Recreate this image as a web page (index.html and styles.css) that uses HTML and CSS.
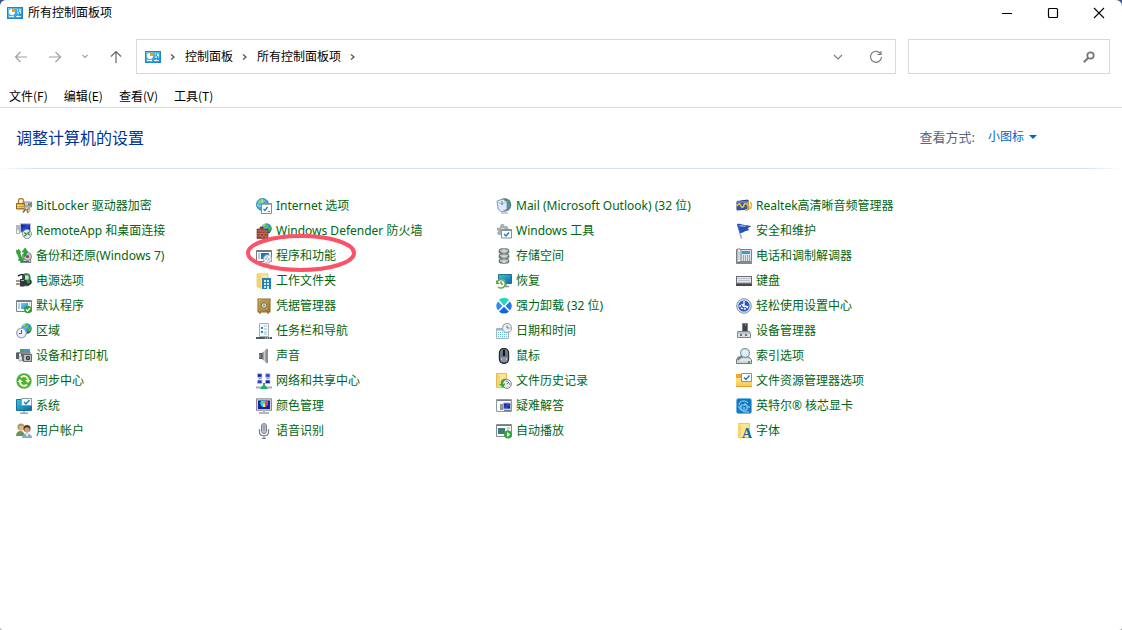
FILE: index.html
```html
<!DOCTYPE html>
<html lang="zh-CN">
<head>
<meta charset="utf-8">
<meta name="viewport" content="width=device-width, initial-scale=1">
<title>所有控制面板项</title>
<link rel="stylesheet" href="styles.css">
</head>
<body>
<svg class="defs" aria-hidden="true">
  <defs>
    <linearGradient id="sky" x1="0" y1="0" x2="1" y2="1"><stop offset="0" stop-color="#6bd3f7"/><stop offset="1" stop-color="#1687d2"/></linearGradient>
    <linearGradient id="screen" x1="0" y1="0" x2="1" y2="1"><stop offset="0" stop-color="#35c8e0"/><stop offset="1" stop-color="#0b66a8"/></linearGradient>
    <linearGradient id="navy" x1="0" y1="0" x2="1" y2="1"><stop offset="0" stop-color="#0b0f8a"/><stop offset=".5" stop-color="#2a45d8"/><stop offset="1" stop-color="#0a0d7a"/></linearGradient>
    <linearGradient id="metal" x1="0" y1="0" x2="1" y2="0"><stop offset="0" stop-color="#5e6266"/><stop offset=".5" stop-color="#c9cdd1"/><stop offset="1" stop-color="#6d7175"/></linearGradient>
    <linearGradient id="gold" x1="0" y1="0" x2="1" y2="1"><stop offset="0" stop-color="#f3cf63"/><stop offset="1" stop-color="#a87413"/></linearGradient>
    <linearGradient id="folder" x1="0" y1="0" x2="0" y2="1"><stop offset="0" stop-color="#ffe08a"/><stop offset="1" stop-color="#f7c64a"/></linearGradient>
    <radialGradient id="ocean" cx=".4" cy=".3" r=".8"><stop offset="0" stop-color="#8fd8ff"/><stop offset=".5" stop-color="#2a7fe0"/><stop offset="1" stop-color="#0b2f9c"/></radialGradient>
    <symbol id="i-panel" viewBox="0 0 16 16"><rect x=".5" y="2.500" width="15" height="11" fill="url(#sky)" stroke="#1d84cf"/><circle cx="5" cy="7" r="3" fill="#fff"/><path d="M5 7V3.500A3.500 3.500 0 0 1 8.500 7z" fill="#f49a1c"/><path d="M10 5h1M12 5h2M10 8h2M13 8h1M12 6.500h2" stroke="#fff"/><path d="M2 11.500h5M9 11.500h5" stroke="#d9f3ff"/><path d="M6 10.500v2M11 10.500v2" stroke="#fff"/></symbol>
    <symbol id="globe" viewBox="0 0 10 10"><circle cx="5" cy="5" r="4.700" fill="url(#ocean)"/><path d="M3 .8 6 .6 5.500 3 3.500 4 2 3zM6 4l3-1 .5 3L7 8.500 5.500 6z" fill="#42b83e"/><path d="M2.200 2.600 4 1.500" stroke="#d6f7d0"/></symbol>
    <symbol id="i-bitlocker" viewBox="0 0 16 16"><path d="M7 4h8.500v5H7z" fill="#d3d6d8" stroke="#858a8e"/><path d="M12 5h3v3h-3z" fill="#72797b"/><path d="M13 6h2" stroke="#55d34a"/><path d="M2.500 6V3a2.500 2.500 0 0 1 5 0v3" fill="none" stroke="#b5862e" stroke-width="1.500"/><path d="M.5 5.500h8v5.500h-8z" fill="url(#gold)" stroke="#966916"/><path d="M1 7.500h7M1 9.500h7" stroke="#fbe18c" stroke-width=".7"/><circle cx="11" cy="9.500" r="2.200" fill="none" stroke="#a3a6a8" stroke-width="1.500"/><path d="m11 11 1 4M9.500 11 7 14.500" stroke="#7d6945" stroke-width="1.500"/><circle cx="12.500" cy="12" r="1.700" fill="none" stroke="#c59743"/></symbol>
    <symbol id="i-remote" viewBox="0 0 16 16"><path d="M4.500.8h10v8.500h-10z" fill="url(#navy)" stroke="#b6bcc6"/><path d="M.5 2.500h3v8h-3z" fill="#eef1f4" stroke="#b0b5bb"/><path d="M1 4h2M1 6h2" stroke="#758594"/><circle cx="11" cy="11" r="4.500" fill="#e5ecf1" stroke="#8d98a2"/><path d="m8.300 9.500 2.200 1.800-2.200 2M13.800 8.500l-2 1.800 2 2" fill="none" stroke="#238b38" stroke-width="1.300"/></symbol>
    <symbol id="i-backup" viewBox="0 0 16 16"><path d="M7 6h6l2 8.500H4.500z" fill="#d5d8da" stroke="#7c8285"/><circle cx="11.500" cy="8.500" r="4" fill="#c5c9cb" stroke="#818689"/><circle cx="11.500" cy="8.500" r="1.500" fill="#943b3f"/><path d="M1 6 0 2l2 1 .5-2L5 4.500 4 5l2 6 1.500-1-.5 4-5-2 1.500-.5L1.500 6zM6 4l3-4 3 4-1.500.2Q11 7 8.500 9q-1-2-.5-5z" fill="#29ad35" stroke="#168023" stroke-width=".5"/><path d="M5 13.500h8" stroke="#5e6467"/></symbol>
    <symbol id="i-power" viewBox="0 0 16 16"><rect x="6.500" y=".8" width="7.500" height="12" rx="3" fill="#2d9e40" stroke="#4a5d50"/><path d="M8 2.500h4.500v4H8z" fill="#c9eccb"/><path d="M0 8h4M0 11h4" stroke="#87795b" stroke-width="1.500"/><path d="M4 6h4l3 2v3l-3 2.500H4z" fill="#33393d"/><path d="M10 10c3 4 7-1 4-3M2 3c5-3 7-1 6 3" fill="none" stroke="#272c2f" stroke-width="1.500"/><path d="M5 7.500h3" stroke="#aeb5b8"/></symbol>
    <symbol id="i-default" viewBox="0 0 16 16"><path d="M.5 2.500h15v11H.5z" fill="#f8fafb" stroke="#7b8288"/><path d="M1 3.500h14" stroke="#737a80"/><path d="M2 6h2M2 8h2M2 10h2M13 6h1" stroke="#70a7c5"/><path d="M5 5h7v6H5z" fill="url(#sky)"/><circle cx="12" cy="11.500" r="3.800" fill="#329a37"/><path d="m10 11.500 1.500 1.500 2.500-3" fill="none" stroke="#fff" stroke-width="1.300"/></symbol>
    <symbol id="i-region" viewBox="0 0 16 16"><use href="#globe" x="5" y="0" width="11" height="11"/><circle cx="5.500" cy="10" r="4.800" fill="#edf1f5" stroke="#98a3af" stroke-width="1.300"/><path d="M5.500 7v3.500H3" fill="none" stroke="#4b5f78"/></symbol>
    <symbol id="i-devices" viewBox="0 0 16 16"><path d="M4 1h10v4H4z" fill="#42a653"/><path d="M8 1h5v4H8z" fill="#4394e0"/><path d="M.5 4h14v2H.5z" fill="#85898d"/><path d="M0 5h3v6H0zM5 6h2v7H5z" fill="#5a5e63"/><path d="M3 8h3v5H3z" fill="#eceff1" stroke="#7c8287" stroke-width=".6"/><rect x="7.500" y="6.500" width="8" height="7" fill="#bdc1c5" stroke="#666b70"/><circle cx="12" cy="10" r="2.200" fill="#343b43"/><circle cx="12" cy="10" r=".7" fill="#e0e5e8"/></symbol>
    <symbol id="i-sync" viewBox="0 0 16 16"><circle cx="8" cy="8" r="7.700" fill="#4caf43"/><path d="M4 9a4 4 0 0 0 7 2.500M12 7a4 4 0 0 0-7-2.500" fill="none" stroke="#f7f6b8" stroke-width="2"/><path d="M1.500 9 4 6l3 3zM9 7l3 3 2.500-3z" fill="#f7f6b8"/></symbol>
    <symbol id="i-system" viewBox="0 0 16 16"><path d="M.5 1.500h15v11H.5z" fill="url(#screen)" stroke="#1b739b"/><path d="M8 13v2M4 15.300h8" stroke="#9ba5ab" stroke-width="1.500"/><path d="M5.500.5h10v7h-10z" fill="#fff" stroke="#8d989d"/><path d="m8 4 2 2 3.500-4" fill="none" stroke="#1578c6" stroke-width="1.400"/></symbol>
    <symbol id="i-users" viewBox="0 0 16 16"><circle cx="5" cy="4" r="3.500" fill="#a39a55"/><circle cx="5.500" cy="5" r="2.500" fill="#e1b88d"/><path d="M0 13c0-6 8-7 9 0z" fill="#63965a"/><circle cx="11" cy="5.500" r="3.500" fill="#533724"/><circle cx="11" cy="7" r="2.700" fill="#d69c73"/><path d="M6 15c0-6 10-6 10 0z" fill="#7fa9d7"/><path d="m10 11 1 3 1.500-3" fill="#fff"/></symbol>
    <symbol id="i-internet" viewBox="0 0 16 16"><circle cx="6.500" cy="6.500" r="6" fill="url(#sky)" stroke="#397ea8"/><path d="M2 4c2-3 5-3 7-1L7 6 4 6z" fill="#7ed06c"/><path d="M1 7c3 2 8 2 10-1M6 1v10" fill="none" stroke="#d7f3ff" stroke-width=".7"/><path d="M5.500 5.500h10v10h-10z" fill="#fff" stroke="#828d96"/><path d="M6 6.500h9" stroke="#a4acb2"/><path d="m7.500 11 1.500 1.500L11.500 9" fill="none" stroke="#187fc4" stroke-width="1.300"/><path d="M12 13.500h2" stroke="#777"/></symbol>
    <symbol id="i-firewall" viewBox="0 0 16 16"><use href="#globe" x="5" y="0" width="11" height="11"/><path d="M1 6h3V4h3v2h5v9.500H1z" fill="#933f32" stroke="#6b2921" stroke-width=".6"/><path d="M1 8h11M1 10.500h11M1 13h11M4 6v2M8 6v2M6 8v2M10 8v2M4 11v2M8 11v2M6 13v2M10 13v2" stroke="#d5a394" stroke-width=".5"/></symbol>
    <symbol id="i-programs" viewBox="0 0 16 16"><path d="M.5 2.500h15v11H.5z" fill="#f9fafb" stroke="#747b83"/><path d="M1 3.500h14" stroke="#6e757d"/><path d="M2 6h2M2 8h2M2 10h2" stroke="#8d969f"/><path d="M5 5h8v6H5z" fill="#1675c6"/><circle cx="11.500" cy="11" r="4.200" fill="#d7dce5" stroke="#9ca6b4" stroke-width=".7"/><path d="M11.500 11 14 8M11.500 11 9 14" stroke="#fff" stroke-width="1.500"/><circle cx="11.500" cy="11" r="1.200" fill="#fff" stroke="#7b8795" stroke-width=".5"/></symbol>
    <symbol id="i-work" viewBox="0 0 16 16"><path d="M1 .8h11v13H1z" fill="#ffe58f" stroke="#e4bd50" stroke-width=".7"/><path d="M1 1 5 3v13l-4-2z" fill="#f5d272"/><path d="M6 5h9v11H6z" fill="#287cb4"/><path d="M8 7h2v2H8zM11 7h2v2h-2zM8 10h2v2H8zM11 10h2v2h-2zM8 13h2v2H8zM11 13h2v3h-2z" fill="#c4edff"/></symbol>
    <symbol id="i-vault" viewBox="0 0 16 16"><rect x="2" y="1" width="12" height="13" fill="url(#gold)" stroke="#85672b"/><path d="M4 3h8v9H4z" fill="#c3a462" stroke="#8f7338" stroke-width=".7"/><circle cx="8" cy="7.500" r="2.800" fill="#dfe0d5" stroke="#6e6650"/><circle cx="8" cy="7.500" r="1" fill="#817a66"/><path d="M3 15h2M11 15h2" stroke="#584821"/></symbol>
    <symbol id="i-taskbar" viewBox="0 0 16 16"><path d="M3.500.5h9v13h-9z" fill="#f7fafc" stroke="#a7afb6"/><path d="M5 4h2v2H5zM5 8h2v2H5z" fill="#2387d1"/><path d="M8 3h3M8 6h3M8 9h3M8 11h3" stroke="#a8bac7"/><path d="M0 14h16v2H0z" fill="#525a60"/><path d="M9 15h1M11 15h1M13 15h1" stroke="#fff"/></symbol>
    <symbol id="i-sound" viewBox="0 0 16 16"><path d="M3 5h3v6H3z" fill="#53585d"/><path d="M6 5 11 .5v15L6 11z" fill="url(#metal)"/><path d="M10 1h2v14h-2z" fill="#8c9196"/><path d="M4 6v4" stroke="#a6aaae"/></symbol>
    <symbol id="i-network" viewBox="0 0 16 16"><path d="M1.500.8h4.500v3.500H1.500zM9.500.8h4.500v3.500H9.500zM1.500 7h4.500v3.500H1.500zM9.500 7h4.500v3.500H9.500z" fill="url(#navy)" stroke="#b9c0d8" stroke-width=".8"/><path d="M2.500 5.500h3M10.500 5.500h3" stroke="#8d989e"/><path d="M0 14.500h16" stroke="#a4afb5" stroke-width="2"/><path d="M7 10h2v2l3 4H4l3-4z" fill="#21ac69"/></symbol>
    <symbol id="i-color" viewBox="0 0 16 16"><path d="M.5.8h15v11.500H.5z" fill="#d3d5d1" stroke="#898c87"/><path d="M2 2.500h12v8.500H2z" fill="#1420a5"/><path d="M4 4h3v5L5 8z" fill="#20cee4"/><path d="M7 3h3v6H7z" fill="#f2ed46"/><path d="M9 3h3v4L9 9z" fill="#ed367f"/><path d="M5 3h4v3H5z" fill="#4ee06f"/><path d="M8 12v2M3 15h10" stroke="#b4b7b2" stroke-width="2"/></symbol>
    <symbol id="i-mic" viewBox="0 0 16 16"><rect x="5.500" y=".5" width="5" height="10" rx="2.500" fill="#d8dce5" stroke="#767e91"/><path d="M6 3h4M6 5h4M6 7h4M8 1v9" stroke="#858ca0" stroke-width=".8"/><path d="M3.500 6v3c0 5 9 5 9 0V6M8 13v2.500M6 15.500h4" fill="none" stroke="#777e94" stroke-width="1.200"/></symbol>
    <symbol id="i-mail" viewBox="0 0 16 16"><circle cx="8.500" cy="7" r="6.800" fill="#778da1"/><path d="M7 1c5-2 9 3 8 7l-3 5z" fill="#4a8f56"/><path d="M11 2c4 3 4 8 0 10" fill="#6184c4"/><path d="M1 3 7 1l4 3v7l-5 3-4-3z" fill="#dceafa" stroke="#6d8aa8" stroke-width=".8"/><path d="m1 4 5 2 5-2" fill="none" stroke="#aec4da"/><path d="M6 3v4" stroke="#4d79aa"/><path d="M5 15h7" stroke="#b7bec5" stroke-width="1.500"/></symbol>
    <symbol id="i-tools" viewBox="0 0 16 16"><path d="m5 1 3 .2.500 2 2-.5 2 2-1 2 2 1v3l-2 .5-3 3-3-.5-1-2-2 .5-1.500-2.500 1.500-1.500-1.500-1L1 4.500l2.500.5z" fill="#a7afb6"/><circle cx="7" cy="7" r="2" fill="#edf0f3"/><path d="M5.500 6.500h10v8.500h-10z" fill="#fff" stroke="#858f96"/><path d="M6 7.500h9" stroke="#88939a"/><path d="m8 11 2 2 3-3.500" fill="none" stroke="#187bc0" stroke-width="1.400"/></symbol>
    <symbol id="i-storage" viewBox="0 0 16 16"><path d="M3 2.500c0-3 10-3 10 0v2c0 2-10 2-10 0zM3 7.500c0-3 10-3 10 0v2c0 2-10 2-10 0zM3 12.500c0-3 10-3 10 0v1.500c0 2-10 2-10 0z" fill="url(#metal)" stroke="#676b6f" stroke-width=".6"/><path d="M4 2.500c2 1 6 1 8 0M4 7.500c2 1 6 1 8 0M4 12.500c2 1 6 1 8 0" fill="none" stroke="#e6e8e9"/><path d="M10 4.500h1M10 9.500h1M10 14h1" stroke="#59e149"/></symbol>
    <symbol id="i-recovery" viewBox="0 0 16 16"><path d="M2.500 1.500h13v9h-13z" fill="url(#screen)" stroke="#256f8b"/><path d="M10 11v2M8 13.500h5" stroke="#8b969b" stroke-width="1.300"/><circle cx="5" cy="10.500" r="4.500" fill="#f5faed"/><path d="M1 9a4.300 4.300 0 1 1 1 5" fill="none" stroke="#66a944" stroke-width="1.500"/><path d="M0 7v4h4z" fill="#66a944"/><path d="M5 8v3h2" fill="none" stroke="#46663c"/></symbol>
    <symbol id="i-uninstall" viewBox="0 0 16 16"><path d="M3.500 1.800Q8-1.300 12.500 1.800L8 7z" fill="#20d6c4" stroke="#20d6c4"/><path d="M2 3.500 6.500 8 2 12.500Q-1.500 8 2 3.500z" fill="#2e8cf0"/><path d="M14 3.500 9.500 8l4.500 4.500Q17.500 8 14 3.500z" fill="#2476e7"/><path d="m8 8.700 5 5Q8 17.500 3 13.700z" fill="#1465e5"/></symbol>
    <symbol id="i-date" viewBox="0 0 16 16"><path d="M.5 5.500h12v10H.5z" fill="#f3fafc" stroke="#a4b7bf"/><path d="M1 6.500h11" stroke="#88b9ce" stroke-width="2"/><path d="M2 9.500h9M2 11.500h9M2 13.500h9" stroke="#68b9d9" stroke-dasharray="1 1"/><circle cx="11" cy="5" r="4.500" fill="#edf1f3" stroke="#9aa6ad" stroke-width="1.200"/><path d="M11 2.500V5h2.500" fill="none" stroke="#647581"/></symbol>
    <symbol id="i-mouse" viewBox="0 0 16 16"><rect x="3.500" y=".7" width="9" height="14.600" rx="4" fill="#8793a2" stroke="#25292e" stroke-width="1.400"/><path d="M5 4q3-4 6 0v5H5z" fill="#66727f"/><path d="M8 2v6" stroke="#15191d" stroke-width="2"/><path d="M5.500 10v2M10.500 10v2" stroke="#b9c6d5"/></symbol>
    <symbol id="i-history" viewBox="0 0 16 16"><path d="M.5.5h10v14H.5z" fill="#ffe58b" stroke="#dfbc55"/><path d="M1 1 4 3v13l-3-2z" fill="#f4d376"/><circle cx="11" cy="11" r="4.400" fill="#e4e8e9" stroke="#7f878b"/><path d="m11 11 2-2M8 11h1M11 8v1M13 11h1" stroke="#58636a"/><path d="M11 6C6 5 4 8 5 11H3l4 4 2-4H7c0-3 1-4 4-5z" fill="#38aa3c"/></symbol>
    <symbol id="i-trouble" viewBox="0 0 16 16"><path d="M.5 1.500h15v12H.5z" fill="#f9fafb" stroke="#9198a0"/><path d="M1 2.500h14" stroke="#747c86"/><path d="M7.500 5h7v6h-7z" fill="url(#navy)" stroke="#a8b0ba"/><path d="M4 6h3v6H4z" fill="#8a929c"/><path d="M8 12.500h7" stroke="#6c7788"/><path d="M5 8h1" stroke="#7ee370"/></symbol>
    <symbol id="i-autoplay" viewBox="0 0 16 16"><path d="M.5 1.500h15v12H.5z" fill="#f9fafa" stroke="#858c91"/><path d="M1 2.500h14" stroke="#737b81"/><path d="M2 5h7v6H2z" fill="#3c7d75"/><path d="M11 5h3M11 7h2" stroke="#9aaaa8"/><circle cx="12" cy="11.500" r="4" fill="#37a83e"/><path d="m11 9 3 2.500-3 2.500z" fill="#fff"/></symbol>
    <symbol id="i-realtek" viewBox="0 0 16 16"><path d="M1 3.500 12 2l1 9-12 1z" fill="#3757ad" stroke="#294482"/><path d="M1 4h11" stroke="#899ece"/><path d="M1 8c2-4 3-2 4 0s3 1 3-1 3-2 4 1" fill="none" stroke="#f3cc42" stroke-width="1.500"/><path d="M12 4v7M14 4c2 2 2 5 0 7" fill="none" stroke="#eeb134" stroke-width="1.500"/><path d="M9 11h3v2H9z" fill="#eeb134"/></symbol>
    <symbol id="i-flag" viewBox="0 0 16 16"><path d="m1.500 1.500 4 14" stroke="#9ba9b7" stroke-width="1.500"/><path d="M1 1c4-1 5 1 8 1l6.500 1-3.500 2 1 2.500C9 7 8 10 4 10z" fill="#2853b5"/><path d="M3 3c3-1 4 1 7 0" fill="none" stroke="#7ca2e8" stroke-width="1.300"/></symbol>
    <symbol id="i-phone" viewBox="0 0 16 16"><path d="M.5 1.500h15v12H.5z" fill="#e0e4e7" stroke="#7a848c"/><rect x="1" y="1" width="4" height="13" rx="1" fill="#f5f7f8" stroke="#6e7b84"/><path d="M6 3h8v3H6z" fill="#3c9ccb"/><path d="M7 8h7M7 10h7M7 12h7" stroke="#596b78" stroke-dasharray="1 1"/><path d="M0 15h16" stroke="#59656e" stroke-width="1.500"/><path d="M3 3v9" stroke="#a7b2b9"/></symbol>
    <symbol id="i-keyboard" viewBox="0 0 16 16"><path d="M0 3h16v10H0z" fill="#686d73"/><path d="M1 4h14v6H1z" fill="#e6e9eb"/><path d="M1.500 5.500h13M2.500 7.500h12M1.500 9.500h13" stroke="#91989e" stroke-dasharray="1 1"/><path d="M0 12h16" stroke="#454a50" stroke-width="2"/></symbol>
    <symbol id="i-ease" viewBox="0 0 16 16"><circle cx="8" cy="8" r="7.300" fill="#dce2ef" stroke="#8291ab"/><circle cx="8" cy="8" r="5.600" fill="#2457bf"/><path d="M4 7a4 4 0 1 0 8 0" fill="none" stroke="#fff" stroke-width="1.500" stroke-dasharray="2 1"/><path d="M8 3v5M5.500 6 8 8.500h3" fill="none" stroke="#fff" stroke-width="1.400"/></symbol>
    <symbol id="i-manager" viewBox="0 0 16 16"><path d="M6.500.5h5v8h-5z" fill="#3c4248" stroke="#777e84"/><path d="M9 2h1" stroke="#4ee048" stroke-width="1.500"/><path d="M1.500 8.500h12l1 2v4h-13z" fill="#dbdfe2" stroke="#7f878e"/><path d="M5 11v2M10 11v2" stroke="#474e55" stroke-width="1.500"/><path d="M1 10h13" stroke="#9da5ab"/></symbol>
    <symbol id="i-index" viewBox="0 0 16 16"><path d="M2 9h11l2.500 3v3.500H.5V12z" fill="#d2d7db" stroke="#717981"/><path d="M1 12h14" stroke="#f5f7f8"/><circle cx="9" cy="5" r="4.400" fill="#d9effb" fill-opacity=".9" stroke="#8197a8" stroke-width="1.200"/><path d="M6 8 1.500 12" stroke="#717e89" stroke-width="1.700"/><path d="M12 14h2" stroke="#27b632" stroke-width="2"/></symbol>
    <symbol id="i-explorer" viewBox="0 0 16 16"><path d="M0 1h6l2 2h8v11H0z" fill="#e7a927"/><path d="M0 5h16v9H0z" fill="url(#folder)"/><path d="M5.500.5h10v8h-10z" fill="#fff" stroke="#86919a"/><path d="m8 4.500 2 2 3.500-4" fill="none" stroke="#1679ce" stroke-width="1.400"/><path d="M0 13.500h16" stroke="#e1a02b"/></symbol>
    <symbol id="i-intel" viewBox="0 0 16 16"><rect x=".5" y=".5" width="15" height="15" rx="2" fill="#1478bd" stroke="#6ab8e7"/><path d="M3 7c0-5 7-5 9-2M5 7h6v5H5zM2 9h3M3 11h2M11 9h3M6 12c0 2 3 2 7 2M9 5v2" fill="none" stroke="#a4ddfa"/><path d="M7 9h2v2H7z" fill="#57b9ef"/></symbol>
    <symbol id="i-fonts" viewBox="0 0 16 16"><path d="M2.500.5h11v14h-11z" fill="#ffe58a" stroke="#ecc762"/><path d="M2 1 5 3v13l-3-2z" fill="#f6d373"/><text class="font-letter" x="6" y="15">A</text></symbol>
  </defs>
</svg>
<div class="window">
  <header class="titlebar">
    <svg class="icon" aria-hidden="true"><use href="#i-panel"/></svg>
    <h1 class="title">所有控制面板项</h1>
    <div class="caption">
      <button class="caption-btn" aria-label="最小化"><svg width="12" height="12"><path d="M1 6.500h10" stroke="#000"/></svg></button>
      <button class="caption-btn" aria-label="最大化"><svg width="12" height="12"><rect x="1.500" y="1.500" width="9" height="9" rx="1" fill="none" stroke="#000" stroke-width="1.200"/></svg></button>
      <button class="caption-btn" aria-label="关闭"><svg width="12" height="12"><path d="m1 1 10 10M11 1 1 11" stroke="#000" stroke-width="1.100"/></svg></button>
    </div>
  </header>
  <div class="toolbar">
    <div class="history">
      <button class="nav-btn" aria-label="后退"><svg width="14" height="14" fill="none" stroke="#a0a0a0" stroke-width="1.200"><path d="M13 7H1.500M6.500 2l-5 5 5 5"/></svg></button>
      <button class="nav-btn" aria-label="前进"><svg width="14" height="14" fill="none" stroke="#a0a0a0" stroke-width="1.200"><path d="M1 7h11.500M7.500 2l5 5-5 5"/></svg></button>
      <button class="nav-btn nav-small" aria-label="最近浏览的位置"><svg width="8" height="8" fill="none" stroke="#a0a0a0" stroke-width="1.200"><path d="m1.500 2 2.500 2.500L6.500 2"/></svg></button>
      <button class="nav-btn" aria-label="向上"><svg width="14" height="14" fill="none" stroke="#666" stroke-width="1.200"><path d="M7 13V1.500M2 6.500l5-5 5 5"/></svg></button>
    </div>
    <nav class="address" aria-label="地址">
      <svg class="icon" aria-hidden="true"><use href="#i-panel"/></svg>
      <svg class="chev" width="6" height="8"><path d="m1 1.500 3 2.500-3 2.500"/></svg>
      <a class="crumb" href="#">控制面板</a>
      <svg class="chev" width="6" height="8"><path d="m1 1.500 3 2.500-3 2.500"/></svg>
      <a class="crumb" href="#">所有控制面板项</a>
      <svg class="chev" width="6" height="8"><path d="m1 1.500 3 2.500-3 2.500"/></svg>
      <div class="address-tools">
        <button class="tool-btn" aria-label="以前的位置"><svg width="10" height="8" fill="none" stroke="#777" stroke-width="1.100"><path d="m1 2 4 4 4-4"/></svg></button>
        <button class="tool-btn" aria-label="刷新"><svg width="14" height="14" fill="none" stroke="#777" stroke-width="1.100"><path d="M12 4.500A5.500 5.500 0 1 0 12.500 7M12 1v3.500H8.500"/></svg></button>
      </div>
    </nav>
    <label class="search">
      <input class="search-input" type="search" aria-label="搜索控制面板">
      <svg width="12" height="12" fill="none" stroke="#777"><circle cx="7.500" cy="4.500" r="3.200" stroke-width="1.800"/><path d="M5 7 .8 11.200" stroke-width="2"/></svg>
    </label>
  </div>
  <nav class="menubar" aria-label="菜单">
    <button class="menu">文件(F)</button>
    <button class="menu">编辑(E)</button>
    <button class="menu">查看(V)</button>
    <button class="menu">工具(T)</button>
  </nav>
  <main>
    <div class="heading-row">
      <h2 class="heading">调整计算机的设置</h2>
      <div class="view">
        <label class="view-label" for="view-by">查看方式:</label>
        <div class="view-pick">
          <select class="view-select" id="view-by"><option>小图标</option><option>大图标</option><option>类别</option></select>
          <svg width="8" height="4" aria-hidden="true"><path d="M0 0h8L4 4z" fill="#0066cc"/></svg>
        </div>
      </div>
    </div>
    <div class="rule"></div>
    <ul class="items">
      <li><a class="item" href="#"><svg class="icon"><use href="#i-bitlocker"/></svg>BitLocker 驱动器加密</a></li>
      <li><a class="item" href="#"><svg class="icon"><use href="#i-internet"/></svg>Internet 选项</a></li>
      <li><a class="item" href="#"><svg class="icon"><use href="#i-mail"/></svg>Mail (Microsoft Outlook) (32 位)</a></li>
      <li><a class="item" href="#"><svg class="icon"><use href="#i-realtek"/></svg>Realtek高清晰音频管理器</a></li>
      <li><a class="item" href="#"><svg class="icon"><use href="#i-remote"/></svg>RemoteApp 和桌面连接</a></li>
      <li><a class="item" href="#"><svg class="icon"><use href="#i-firewall"/></svg>Windows Defender 防火墙</a></li>
      <li><a class="item" href="#"><svg class="icon"><use href="#i-tools"/></svg>Windows 工具</a></li>
      <li><a class="item" href="#"><svg class="icon"><use href="#i-flag"/></svg>安全和维护</a></li>
      <li><a class="item" href="#"><svg class="icon"><use href="#i-backup"/></svg>备份和还原(Windows 7)</a></li>
      <li><a class="item marked" href="#"><svg class="icon"><use href="#i-programs"/></svg>程序和功能<svg class="mark" width="112" height="40" aria-hidden="true"><ellipse cx="56" cy="20" rx="53" ry="17" fill="none" stroke="#fc5268" stroke-width="4"/></svg></a></li>
      <li><a class="item" href="#"><svg class="icon"><use href="#i-storage"/></svg>存储空间</a></li>
      <li><a class="item" href="#"><svg class="icon"><use href="#i-phone"/></svg>电话和调制解调器</a></li>
      <li><a class="item" href="#"><svg class="icon"><use href="#i-power"/></svg>电源选项</a></li>
      <li><a class="item" href="#"><svg class="icon"><use href="#i-work"/></svg>工作文件夹</a></li>
      <li><a class="item" href="#"><svg class="icon"><use href="#i-recovery"/></svg>恢复</a></li>
      <li><a class="item" href="#"><svg class="icon"><use href="#i-keyboard"/></svg>键盘</a></li>
      <li><a class="item" href="#"><svg class="icon"><use href="#i-default"/></svg>默认程序</a></li>
      <li><a class="item" href="#"><svg class="icon"><use href="#i-vault"/></svg>凭据管理器</a></li>
      <li><a class="item" href="#"><svg class="icon"><use href="#i-uninstall"/></svg>强力卸载 (32 位)</a></li>
      <li><a class="item" href="#"><svg class="icon"><use href="#i-ease"/></svg>轻松使用设置中心</a></li>
      <li><a class="item" href="#"><svg class="icon"><use href="#i-region"/></svg>区域</a></li>
      <li><a class="item" href="#"><svg class="icon"><use href="#i-taskbar"/></svg>任务栏和导航</a></li>
      <li><a class="item" href="#"><svg class="icon"><use href="#i-date"/></svg>日期和时间</a></li>
      <li><a class="item" href="#"><svg class="icon"><use href="#i-manager"/></svg>设备管理器</a></li>
      <li><a class="item" href="#"><svg class="icon"><use href="#i-devices"/></svg>设备和打印机</a></li>
      <li><a class="item" href="#"><svg class="icon"><use href="#i-sound"/></svg>声音</a></li>
      <li><a class="item" href="#"><svg class="icon"><use href="#i-mouse"/></svg>鼠标</a></li>
      <li><a class="item" href="#"><svg class="icon"><use href="#i-index"/></svg>索引选项</a></li>
      <li><a class="item" href="#"><svg class="icon"><use href="#i-sync"/></svg>同步中心</a></li>
      <li><a class="item" href="#"><svg class="icon"><use href="#i-network"/></svg>网络和共享中心</a></li>
      <li><a class="item" href="#"><svg class="icon"><use href="#i-history"/></svg>文件历史记录</a></li>
      <li><a class="item" href="#"><svg class="icon"><use href="#i-explorer"/></svg>文件资源管理器选项</a></li>
      <li><a class="item" href="#"><svg class="icon"><use href="#i-system"/></svg>系统</a></li>
      <li><a class="item" href="#"><svg class="icon"><use href="#i-color"/></svg>颜色管理</a></li>
      <li><a class="item" href="#"><svg class="icon"><use href="#i-trouble"/></svg>疑难解答</a></li>
      <li><a class="item" href="#"><svg class="icon"><use href="#i-intel"/></svg>英特尔® 核芯显卡</a></li>
      <li><a class="item" href="#"><svg class="icon"><use href="#i-users"/></svg>用户帐户</a></li>
      <li><a class="item" href="#"><svg class="icon"><use href="#i-mic"/></svg>语音识别</a></li>
      <li><a class="item" href="#"><svg class="icon"><use href="#i-autoplay"/></svg>自动播放</a></li>
      <li><a class="item" href="#"><svg class="icon"><use href="#i-fonts"/></svg>字体</a></li>
    </ul>
  </main>
</div>
</body>
</html>
```
FILE: styles.css
```css
* { box-sizing: border-box; }
html { background: linear-gradient(#3a5488 50%, #a0a0a0 50%); }
body {
  margin: 0;
  font: 12px/16px "Noto Sans", "Noto Sans CJK SC", sans-serif;
  color: #000;
}
button, input, select { font: inherit; color: inherit; border: 0; background: none; padding: 0; margin: 0; }
a { color: inherit; text-decoration: none; }
svg { display: block; flex: none; }
.defs { position: absolute; width: 0; height: 0; }
.icon { width: 16px; height: 16px; }
.font-letter { font: 700 14px "Liberation Serif", serif; fill: #1766a8; }
.window { min-height: 100vh; background: #fff; border-radius: 6px 6px 3px 3px; }

.titlebar { display: flex; align-items: center; gap: 5px; height: 26px; padding-left: 7px; }
.title { margin: 0; font-size: 12px; font-weight: 400; }
.caption { display: flex; align-self: stretch; margin-left: auto; }
.caption-btn { display: flex; align-items: center; justify-content: center; width: 46px; }

.toolbar { display: flex; align-items: center; padding: 13px 12px 0 13px; gap: 12px; }
.history { display: flex; align-items: center; width: 111px; gap: 19px; }
.nav-btn { display: flex; align-items: center; justify-content: center; width: 15px; height: 24px; }
.nav-small { width: 8px; }
.address { display: flex; flex: 1; align-items: center; gap: 9px; height: 35px; border: 1px solid #d9d9d9; padding-left: 8px; }
.chev { fill: none; stroke: #555; stroke-width: 1.3; }
.address-tools { display: flex; align-items: center; margin-left: auto; padding-right: 12px; gap: 26px; }
.tool-btn { display: flex; }
.search { display: flex; align-items: center; width: 202px; height: 35px; border: 1px solid #d9d9d9; padding: 0 14px 0 8px; }
.search-input { flex: 1; min-width: 0; outline: 0; }

.menubar { display: flex; gap: 16px; height: 34px; padding: 12px 9px 0; border-bottom: 1px solid #d9d9d9; }
.menu { height: 20px; font-family: "Noto Sans CJK SC", sans-serif; }

.heading-row { display: flex; justify-content: space-between; align-items: center; height: 60px; padding: 0 85px 2px 16px; }
.heading { margin: 0; font: 400 16px/24px "Noto Sans CJK SC", sans-serif; color: #003399; }
.view { display: flex; align-items: center; gap: 13px; }
.view-label { font-size: 13px; color: #5a6580; }
.view-pick { display: flex; align-items: center; gap: 5px; }
.view-select { appearance: none; width: 36px; color: #0066cc; }
.rule { height: 1px; background: linear-gradient(90deg, transparent, #d6e5f5 32px, #d6e5f5 calc(100% - 32px), transparent); }

.items {
  display: grid;
  grid-template-columns: repeat(auto-fill, 240px);
  grid-auto-rows: 25px;
  align-items: center;
  margin: 0;
  padding: 26px 0 24px 16px;
  list-style: none;
}
.item { display: inline-flex; align-items: center; gap: 4px; color: #006611; white-space: nowrap; }
.marked { position: relative; }
.mark { position: absolute; left: -11px; top: -15px; pointer-events: none; }
```
